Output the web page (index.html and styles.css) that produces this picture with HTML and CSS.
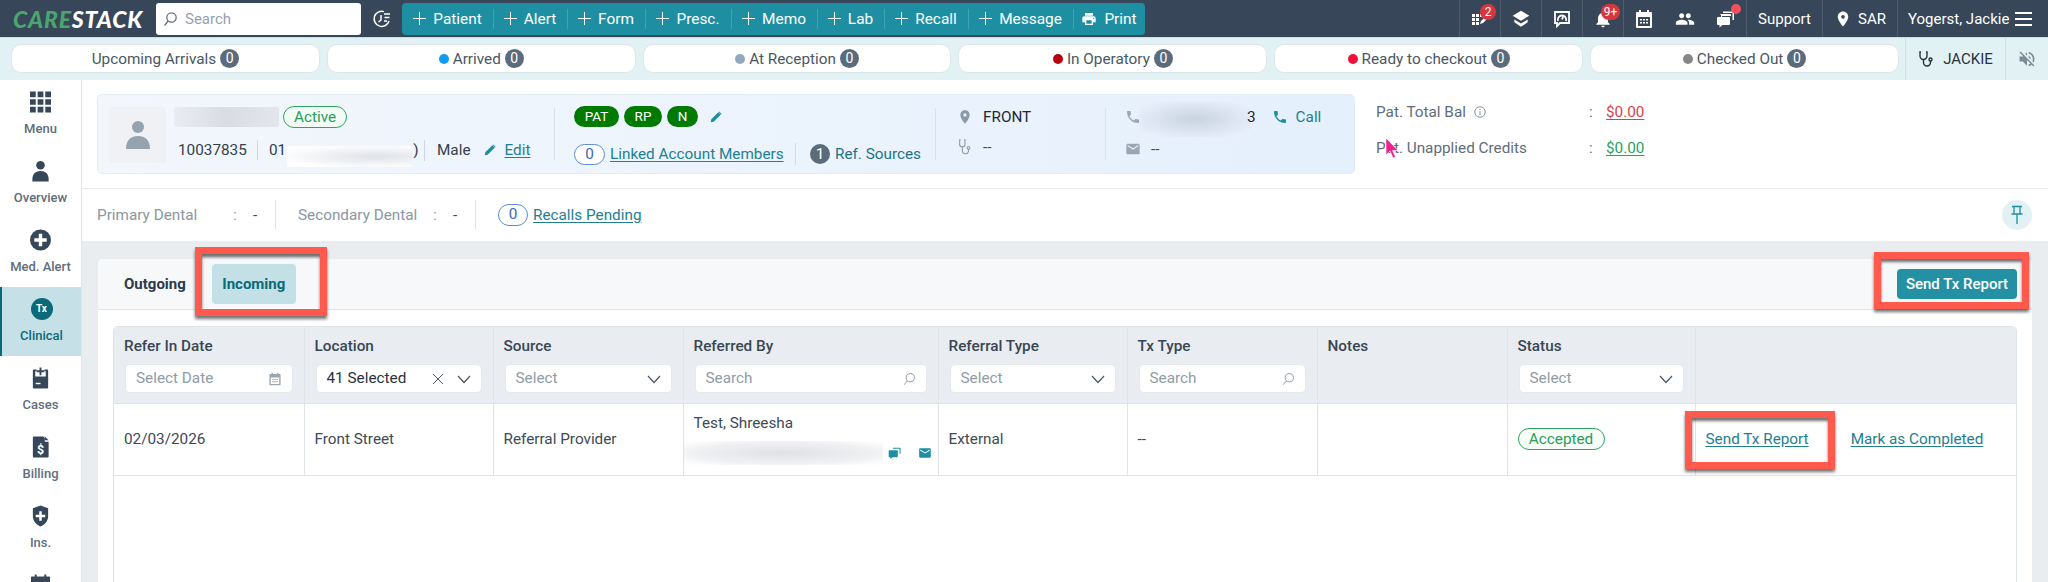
FILE: index.html
```html
<!DOCTYPE html>
<html lang="en">
<head>
<meta charset="UTF-8">
<meta name="viewport" content="width=device-width, initial-scale=1.0">
<title>CareStack - Clinical</title>
<link rel="stylesheet" href="styles.css">
</head>
<body>
<header class="topbar">
    <div class="logo"><span class="logo-care">CARE</span><span class="logo-stack">STACK</span></div>
    <div class="top-search">
        <svg class="ic-16" viewBox="0 0 16 16" fill="none" stroke="#5d6b78" stroke-width="1.2"><circle cx="9.5" cy="6.5" r="4.7"/><path d="M6.2 10 2.5 14.5"/></svg>
        <span>Search</span>
    </div>
    <div class="history">
        <svg width="20" height="20" viewBox="0 0 20 20" fill="none" stroke="#fff" stroke-width="1.5"><path d="M12 2.6A7.6 7.6 0 1 0 17 12"/><path d="M9 6v5l-2.5 2"/><path d="M12 5h6M12.5 8.5h5M12 12h3"/></svg>
    </div>
    <nav class="quick">
        <a class="quick-item"><span class="plus"></span>Patient</a>
        <a class="quick-item"><span class="plus"></span>Alert</a>
        <a class="quick-item"><span class="plus"></span>Form</a>
        <a class="quick-item"><span class="plus"></span>Presc.</a>
        <a class="quick-item"><span class="plus"></span>Memo</a>
        <a class="quick-item"><span class="plus"></span>Lab</a>
        <a class="quick-item"><span class="plus"></span>Recall</a>
        <a class="quick-item"><span class="plus"></span>Message</a>
        <a class="quick-item"><svg class="ic-16" viewBox="0 0 24 24" fill="#fff"><path d="M19 8H5c-1.66 0-3 1.34-3 3v6h4v4h12v-4h4v-6c0-1.66-1.34-3-3-3zm-3 11H8v-5h8v5zm3-7c-.55 0-1-.45-1-1s.45-1 1-1 1 .45 1 1-.45 1-1 1zm-1-9H6v4h12V3z"/></svg>Print</a>
    </nav>
    <div class="top-right">
        <div class="top-cell sep">
            <svg width="18" height="18" viewBox="0 0 18 18" fill="#fff"><path d="M1 4h3v3H1zM5 4h3v3H5zM9 4h3v3H9zM1 8h3v3H1zM5 8h3v3H5zM1 12h3v3H1zM5 12h3v3H5zM9 14l1-3 5-5 2 2-5 5z"/></svg>
            <span class="badge badge-two">2</span>
        </div>
        <div class="top-cell sep">
            <svg width="20" height="20" viewBox="0 0 18 18" fill="#fff"><path d="M9 1.500 1.500 6 9 10.500 16.500 6z"/><path d="M3 9.500v2.500L9 16l6-4V9.500l-6 3.600z"/></svg>
        </div>
        <div class="top-cell sep">
            <svg width="20" height="20" viewBox="0 0 20 20" fill="none" stroke="#fff" stroke-width="1.8"><path d="M3 3h14v11H8l-3 3v-3H3z"/><path d="M6 12a4.200 4.200 0 1 1 8 0M10 10.500l1.500-4"/></svg>
        </div>
        <div class="top-cell sep">
            <svg width="20" height="20" viewBox="0 0 24 24" fill="#fff"><path d="M12 22c1.100 0 2-.9 2-2h-4c0 1.100.9 2 2 2zm6-6v-5c0-3.070-1.630-5.640-4.500-6.320V4c0-.83-.67-1.500-1.500-1.500s-1.500.67-1.500 1.500v.68C7.640 5.360 6 7.920 6 11v5l-2 2v1h16v-1l-2-2z"/></svg>
            <span class="badge badge-nine">9+</span>
        </div>
        <div class="top-cell sep">
            <svg width="18" height="20" viewBox="0 0 18 20" fill="#fff"><path d="M4 1h2v2h6V1h2v2h2a1 1 0 0 1 1 1v14a1 1 0 0 1-1 1H2a1 1 0 0 1-1-1V4a1 1 0 0 1 1-1h2zM3 8v9h12V8z"/><path d="M5 10h2v1.500H5zM8 10h2v1.500H8zM11 10h2v1.500h-2zM5 13h2v1.500H5zM8 13h2v1.500H8zM11 13h2v1.500h-2z"/></svg>
        </div>
        <div class="top-cell">
            <svg width="20" height="20" viewBox="0 0 24 24" fill="#fff"><path d="M16 11c1.660 0 2.990-1.340 2.990-3S17.660 5 16 5c-1.660 0-3 1.340-3 3s1.340 3 3 3zm-8 0c1.660 0 2.990-1.340 2.990-3S9.660 5 8 5C6.340 5 5 6.340 5 8s1.340 3 3 3zm0 2c-2.330 0-7 1.170-7 3.500V19h14v-2.500c0-2.330-4.670-3.500-7-3.500zm8 0c-.29 0-.62.02-.97.05 1.160.84 1.970 1.970 1.970 3.450V19h6v-2.500c0-2.330-4.670-3.500-7-3.500z"/></svg>
        </div>
        <div class="top-cell">
            <svg width="20" height="20" viewBox="0 0 20 20" fill="#fff"><path d="M7 2.500h10a1 1 0 0 1 1 1V11h-1.500V4H7z"/><path d="M4.500 5h10a1 1 0 0 1 .5 1v1H6v1H5V6H4.500z"/><path d="M2 8h11a1 1 0 0 1 1 1v6a1 1 0 0 1-1 1H6.500L3.500 18.500V16H2a1 1 0 0 1-1-1V9a1 1 0 0 1 1-1z"/></svg>
            <span class="dot-alert"></span>
        </div>
        <div class="top-link support">Support</div>
        <div class="top-link sar">
            <svg width="18" height="20" viewBox="0 0 24 24" fill="#fff"><path d="M12 2C8.130 2 5 5.130 5 9c0 5.250 7 13 7 13s7-7.750 7-13c0-3.870-3.130-7-7-7zm0 9.500a2.500 2.500 0 0 1 0-5 2.500 2.500 0 0 1 0 5z"/></svg>
            SAR
        </div>
        <div class="top-link user">
            Yogerst, Jackie
            <span class="burger"><i></i><i></i><i></i></span>
        </div>
    </div>
</header>

<section class="statusbar">
    <div class="pills">
        <div class="pill">Upcoming Arrivals <b class="count">0</b></div>
        <div class="pill"><span class="dot dot-blue"></span>Arrived <b class="count">0</b></div>
        <div class="pill"><span class="dot dot-slate"></span>At Reception <b class="count">0</b></div>
        <div class="pill"><span class="dot dot-darkred"></span>In Operatory <b class="count">0</b></div>
        <div class="pill"><span class="dot dot-red"></span>Ready to checkout <b class="count">0</b></div>
        <div class="pill"><span class="dot dot-grey"></span>Checked Out <b class="count">0</b></div>
    </div>
    <div class="provider">
        <svg width="18" height="18" viewBox="0 0 18 18" fill="none" stroke="#27333f" stroke-width="1.4"><path d="M3 2H2v4a3.500 3.500 0 0 0 7 0V2H8"/><path d="M5.500 9.500v3a3.500 3.500 0 0 0 7 0V11"/><circle cx="12.500" cy="9.500" r="1.500"/></svg>
        JACKIE
    </div>
    <div class="mute">
        <svg width="20" height="20" viewBox="0 0 24 24" fill="#7d8a96"><path d="M16.500 12c0-1.770-1.020-3.290-2.500-4.030v2.210l2.450 2.450c.03-.2.05-.41.05-.63zm2.500 0c0 .94-.2 1.820-.54 2.640l1.510 1.510C20.630 14.910 21 13.500 21 12c0-4.280-2.990-7.860-7-8.770v2.060c2.890.86 5 3.540 5 6.710zM4.270 3L3 4.270 7.730 9H3v6h4l5 5v-6.730l4.250 4.250c-.67.52-1.420.93-2.250 1.180v2.060c1.380-.31 2.630-.95 3.690-1.810L19.730 21 21 19.730l-9-9L4.270 3zM12 4L9.910 6.090 12 8.180V4z"/></svg>
    </div>
</section>

<div class="main">
    <aside class="sidebar">
        <a class="side-item">
            <svg class="side-ic" viewBox="0 0 22 22" fill="#374759"><path d="M0 0h6v6H0zM8 0h6v6H8zM16 0h6v6h-6zM0 8h6v6H0zM8 8h6v6H8zM16 8h6v6h-6zM0 16h6v6H0zM8 16h6v6H8zM16 16h6v6h-6z"/></svg>
            <span>Menu</span>
        </a>
        <a class="side-item">
            <svg class="side-ic" viewBox="0 0 22 22" fill="#374759"><circle cx="11" cy="5" r="4.500"/><path d="M2.500 22v-2.500C2.500 14 6 11 11 11s8.500 3 8.500 8.500V22z"/></svg>
            <span>Overview</span>
        </a>
        <a class="side-item">
            <svg class="side-ic" viewBox="0 0 22 22"><circle cx="11" cy="11" r="11" fill="#374759"/><path d="M9.200 4.500h3.600v4.700h4.700v3.600h-4.700v4.700H9.200v-4.700H4.500V9.200h4.700z" fill="#fff"/></svg>
            <span>Med. Alert</span>
        </a>
        <a class="side-item active">
            <span class="tx-ic">Tx</span>
            <span>Clinical</span>
        </a>
        <a class="side-item">
            <svg class="side-ic" viewBox="0 0 22 22" fill="#374759"><path d="M4 2h3v2H5.500v5.500h11V4H15V2h3a1 1 0 0 1 1 1v18a1 1 0 0 1-1 1H4a1 1 0 0 1-1-1V3a1 1 0 0 1 1-1z"/><path d="M10 0h2v3h3v2h-3v3h-2V5H7V3h3zM3 11.500h16V13H3z"/><path d="M6 16h5v1.500H6z" fill="#fff"/></svg>
            <span>Cases</span>
        </a>
        <a class="side-item">
            <svg class="side-ic" viewBox="0 0 22 22"><path d="M5 0h9l1.500 1.500V5.500h4V21a1 1 0 0 1-1 1H4a1 1 0 0 1-1-1V1a1 1 0 0 1 1-1z" fill="#374759"/><path d="M15.500 0 19.500 4h-4z" fill="#374759"/><text x="11" y="18" text-anchor="middle" font-family="Roboto" font-weight="700" font-size="13" fill="#fff">$</text></svg>
            <span>Billing</span>
        </a>
        <a class="side-item">
            <svg class="side-ic" viewBox="0 0 22 22"><path d="M11 0 19 3v8c0 5.500-3.500 9-8 11-4.500-2-8-5.500-8-11V3z" fill="#374759"/><path d="M9.700 6h2.600v3.700H16v2.600h-3.700V16H9.700v-3.700H6V9.700h3.700z" fill="#fff"/></svg>
            <span>Ins.</span>
        </a>
        <a class="side-item">
            <svg class="side-ic" viewBox="0 0 22 22" fill="#374759"><path d="M5 0h2v2h8V0h2v2h3a1 1 0 0 1 1 1v18a1 1 0 0 1-1 1H2a1 1 0 0 1-1-1V3a1 1 0 0 1 1-1h3z"/></svg>
        </a>
    </aside>

    <div class="workspace">
        <section class="patient">
            <div class="card">
                <div class="card-identity">
                    <div class="avatar">
                        <svg width="24" height="30" viewBox="0 0 24 30" fill="#94a3af"><circle cx="12" cy="7" r="6"/><path d="M0 29c0-8 4-13 12-13s12 5 12 13z"/></svg>
                    </div>
                    <div class="identity-text">
                        <div class="id-row">
                            <span class="redact redact-name"></span>
                            <span class="tag-active">Active</span>
                        </div>
                        <div class="id-row id-details">
                            <span class="mrn">10037835</span>
                            <span class="dob">01<span class="redact redact-dob"></span>)</span>
                            <span class="gender">Male</span>
                            <svg class="ic-14 pencil" viewBox="0 0 24 24" fill="#1e8fa3"><path d="M3 21l1-5L16 4l4 4L8 20zM17.500 2.500l4 4-1 1-4-4z"/></svg>
                            <a class="link">Edit</a>
                        </div>
                    </div>
                </div>
                <div class="card-tags">
                    <div class="tags-row">
                        <span class="tag tag-pat">PAT</span>
                        <span class="tag tag-rp">RP</span>
                        <span class="tag tag-n">N</span>
                        <svg class="ic-14" viewBox="0 0 24 24" fill="#1e8fa3"><path d="M3 21l1-5L16 4l4 4L8 20zM17.500 2.500l4 4-1 1-4-4z"/></svg>
                    </div>
                    <div class="tags-row tags-links">
                        <span class="bubble">0</span>
                        <a class="link linked">Linked Account Members</a>
                        <span class="ref-count">1</span>
                        <span class="ref-text">Ref. Sources</span>
                    </div>
                </div>
                <div class="card-location">
                    <div class="info-row">
                        <svg class="ic-16" viewBox="0 0 24 24" fill="#8a98a5"><path d="M12 2C8.130 2 5 5.130 5 9c0 5.250 7 13 7 13s7-7.750 7-13c0-3.870-3.130-7-7-7zm0 9.500a2.500 2.500 0 0 1 0-5 2.500 2.500 0 0 1 0 5z"/></svg>
                        <span class="front">FRONT</span>
                    </div>
                    <div class="info-row">
                        <svg class="ic-16" viewBox="0 0 18 18" fill="none" stroke="#8a98a5" stroke-width="1.2"><path d="M4 1H3v5a3 3 0 0 0 6 0V1H8"/><path d="M6 9v4a3.500 3.500 0 0 0 7 0v-1.500"/><circle cx="13" cy="10" r="1.500"/></svg>
                        <span class="dashes">--</span>
                    </div>
                </div>
                <div class="card-contact">
                    <div class="info-row">
                        <svg class="ic-16" viewBox="0 0 24 24" fill="#9aa7b2"><path d="M6.620 10.790c1.440 2.830 3.760 5.140 6.590 6.590l2.200-2.200c.27-.27.67-.36 1.020-.24 1.120.37 2.330.57 3.570.57.55 0 1 .45 1 1V20c0 .55-.45 1-1 1-9.390 0-17-7.610-17-17 0-.55.45-1 1-1h3.500c.55 0 1 .45 1 1 0 1.250.2 2.450.57 3.570.11.35.03.74-.25 1.020l-2.200 2.200z"/></svg>
                        <span class="redact redact-phone"></span>
                        <span class="phone-end">3</span>
                        <svg class="ic-16 call-ic" viewBox="0 0 24 24" fill="#1e8fa3"><path d="M6.620 10.790c1.440 2.830 3.760 5.140 6.590 6.590l2.200-2.200c.27-.27.67-.36 1.020-.24 1.120.37 2.330.57 3.570.57.55 0 1 .45 1 1V20c0 .55-.45 1-1 1-9.390 0-17-7.610-17-17 0-.55.45-1 1-1h3.500c.55 0 1 .45 1 1 0 1.250.2 2.450.57 3.570.11.35.03.74-.25 1.020l-2.200 2.200z"/></svg>
                        <a class="call">Call</a>
                    </div>
                    <div class="info-row">
                        <svg class="ic-16" viewBox="0 0 24 24" fill="#9aa7b2"><path d="M20 4H4c-1.100 0-2 .9-2 2v12c0 1.100.9 2 2 2h16c1.100 0 2-.9 2-2V6c0-1.100-.9-2-2-2zm0 4l-8 5-8-5V6l8 5 8-5v2z"/></svg>
                        <span class="dashes">--</span>
                    </div>
                </div>
            </div>
            <div class="balances">
                <span class="bal-label">Pat. Total Bal
                    <svg class="ic-14" viewBox="0 0 16 16" fill="none" stroke="#76848f" stroke-width="1"><circle cx="8" cy="8" r="6"/><path d="M8 7v4.500M8 4.500v1.200"/></svg>
                </span>
                <span>:</span>
                <a class="amount amount-red">$0.00</a>
                <span class="bal-label">Pat. Unapplied Credits</span>
                <span>:</span>
                <a class="amount amount-green">$0.00</a>
            </div>
        </section>

        <section class="insurance">
            <span class="ins-label ins-primary">Primary Dental</span>
            <span class="ins-colon">:</span>
            <span class="ins-value">-</span>
            <span class="ins-label ins-secondary">Secondary Dental</span>
            <span class="ins-colon">:</span>
            <span class="ins-value">-</span>
            <span class="bubble bubble-recall">0</span>
            <a class="link recalls">Recalls Pending</a>
            <button class="pin-btn">
                <svg width="14" height="20" viewBox="0 0 14 20" fill="none" stroke="#1e8fa3" stroke-width="1.3"><path d="M2 1.500h10M4 1.500v7M10 1.500v7M1.500 9h11M7 9v10"/></svg>
            </button>
        </section>

        <section class="content">
            <div class="panel">
                <div class="panel-head">
                    <a class="tab">Outgoing</a>
                    <a class="tab tab-active">Incoming</a>
                    <button class="btn-send">Send Tx Report</button>
                </div>
                <div class="panel-body">
                    <div class="table-wrap">
                        <table class="grid">
                            <colgroup>
                                <col class="c-190"><col class="c-189"><col class="c-190"><col class="c-255"><col class="c-189"><col class="c-190"><col class="c-190"><col class="c-188"><col>
                            </colgroup>
                            <thead>
                                <tr>
                                    <th>Refer In Date
                                        <div class="field"><span class="ph">Select Date</span>
                                            <svg class="ic-14" viewBox="0 0 18 20" fill="#9aa7b2"><path d="M4 1h2v2h6V1h2v2h2a1 1 0 0 1 1 1v14a1 1 0 0 1-1 1H2a1 1 0 0 1-1-1V4a1 1 0 0 1 1-1h2zM3 8v9h12V8z"/><path d="M5 10h2v1.500H5zM8 10h2v1.500H8zM11 10h2v1.500h-2zM5 13h2v1.500H5zM8 13h2v1.500H8zM11 13h2v1.500h-2z"/></svg>
                                        </div>
                                    </th>
                                    <th>Location
                                        <div class="field"><span class="val">41 Selected</span>
                                            <span class="field-ics">
                                                <svg class="ic-14" viewBox="0 0 14 14" fill="none" stroke="#4a5865" stroke-width="1"><path d="M2 2l10 10M12 2 2 12"/></svg>
                                                <svg class="ic-14" viewBox="0 0 14 14" fill="none" stroke="#4a5865" stroke-width="1.2"><path d="M1 4l6 6.500L13 4"/></svg>
                                            </span>
                                        </div>
                                    </th>
                                    <th>Source
                                        <div class="field"><span class="ph">Select</span>
                                            <svg class="ic-14" viewBox="0 0 14 14" fill="none" stroke="#4a5865" stroke-width="1.2"><path d="M1 4l6 6.500L13 4"/></svg>
                                        </div>
                                    </th>
                                    <th>Referred By
                                        <div class="field"><span class="ph">Search</span>
                                            <svg class="ic-14" viewBox="0 0 16 16" fill="none" stroke="#8a98a5" stroke-width="1.1"><circle cx="9.500" cy="6.500" r="4.700"/><path d="M6.200 10 2.500 14.500"/></svg>
                                        </div>
                                    </th>
                                    <th>Referral Type
                                        <div class="field"><span class="ph">Select</span>
                                            <svg class="ic-14" viewBox="0 0 14 14" fill="none" stroke="#4a5865" stroke-width="1.2"><path d="M1 4l6 6.500L13 4"/></svg>
                                        </div>
                                    </th>
                                    <th>Tx Type
                                        <div class="field"><span class="ph">Search</span>
                                            <svg class="ic-14" viewBox="0 0 16 16" fill="none" stroke="#8a98a5" stroke-width="1.1"><circle cx="9.500" cy="6.500" r="4.700"/><path d="M6.200 10 2.500 14.500"/></svg>
                                        </div>
                                    </th>
                                    <th>Notes</th>
                                    <th>Status
                                        <div class="field"><span class="ph">Select</span>
                                            <svg class="ic-14" viewBox="0 0 14 14" fill="none" stroke="#4a5865" stroke-width="1.2"><path d="M1 4l6 6.500L13 4"/></svg>
                                        </div>
                                    </th>
                                    <th></th>
                                </tr>
                            </thead>
                            <tbody>
                                <tr>
                                    <td>02/03/2026</td>
                                    <td>Front Street</td>
                                    <td>Referral Provider</td>
                                    <td class="referred">
                                        <div class="ref-name">Test, Shreesha</div>
                                        <div class="ref-contact">
                                            <span class="redact redact-ref"></span>
                                            <svg class="ic-14" viewBox="0 0 20 20" fill="#1e8fa3"><path d="M7 2.500h10a1 1 0 0 1 1 1V11h-1.500V4H7z"/><path d="M2 6h11a1 1 0 0 1 1 1v8a1 1 0 0 1-1 1H6.500L3.500 18.500V16H2a1 1 0 0 1-1-1V7a1 1 0 0 1 1-1z"/></svg>
                                            <svg class="ic-14" viewBox="0 0 24 24" fill="#1e8fa3"><path d="M20 4H4c-1.100 0-2 .9-2 2v12c0 1.100.9 2 2 2h16c1.100 0 2-.9 2-2V6c0-1.100-.9-2-2-2zm0 4l-8 5-8-5V6l8 5 8-5v2z"/></svg>
                                        </div>
                                    </td>
                                    <td>External</td>
                                    <td>--</td>
                                    <td></td>
                                    <td><span class="tag-accepted">Accepted</span></td>
                                    <td class="actions"><a class="link act-send">Send Tx Report</a><a class="link act-done">Mark as Completed</a></td>
                                </tr>
                            </tbody>
                        </table>
                    </div>
                </div>
            </div>
        </section>
    </div>
</div>

<div class="mark mark-tab"></div>
<div class="mark mark-btn"></div>
<div class="mark mark-link"></div>
<svg class="cursor" width="14" height="22" viewBox="0 0 14 22"><path d="M1 1v17l4-4 3 7 2.500-1-3-6.500H13z" fill="#ee1f8f" stroke="#fff" stroke-width=".6"/></svg>
</body>
</html>
```

FILE: styles.css
```css
* {
    box-sizing: border-box;
}
html, body {
    margin: 0;
    height: 582px;
    overflow: hidden;
}
body {
    position: relative;
    font-family: Roboto, "Liberation Sans", sans-serif;
    font-size: 15.3px;
    color: #3d4a57;
    background: #fff;
    display: flex;
    flex-direction: column;
}
a {
    cursor: pointer;
}
svg {
    flex: none;
    display: block;
}
.ic-14 {
    width: 14px;
    height: 14px;
}
.ic-16 {
    width: 16px;
    height: 16px;
}

/* top bar */
.topbar {
    height: 38px;
    flex: none;
    display: flex;
    align-items: center;
    background: #374759;
    color: #fff;
    border-bottom: 1px solid #c9dde2;
}
.logo {
    width: 156px;
    padding-left: 13px;
    font-family: Lato, sans-serif;
    font-size: 23px;
    font-weight: 900;
    font-style: italic;
    letter-spacing: .8px;
    white-space: nowrap;
}
.logo-care {
    color: #4aa56f;
}
.top-search {
    width: 205px;
    height: 32px;
    background: #fff;
    border-radius: 3px;
    display: flex;
    align-items: center;
    gap: 7px;
    padding-left: 6px;
    color: #94a0ab;
    font-size: 15px;
}
.history {
    width: 41px;
    display: flex;
    justify-content: center;
}
.quick {
    width: 743px;
    height: 32px;
    display: grid;
    grid-template-columns: 91px 74px 78px 86px 86px 67px 84px 105px 72px;
    background: #1e8fa3;
    border-radius: 4px;
}
.quick-item {
    display: flex;
    align-items: center;
    justify-content: center;
    gap: 7px;
    font-size: 15.4px;
    position: relative;
}
.quick-item + .quick-item::before {
    content: "";
    position: absolute;
    left: 0;
    top: 6px;
    bottom: 6px;
    border-left: 1px solid #3fa3b4;
}
.plus {
    width: 13px;
    height: 13px;
    background:
        linear-gradient(#fff, #fff) center / 13px 1.4px no-repeat,
        linear-gradient(#fff, #fff) center / 1.4px 13px no-repeat;
}
.top-right {
    margin-left: auto;
    height: 37px;
    display: flex;
    align-items: stretch;
}
.top-cell {
    width: 41px;
    position: relative;
    display: flex;
    align-items: center;
    justify-content: center;
}
.top-cell.sep {
    border-left: 1px solid #4d5d6e;
}
.badge {
    position: absolute;
    background: #d8363f;
    border-radius: 50%;
    font-size: 12px;
    line-height: 16px;
    height: 16px;
    min-width: 16px;
    text-align: center;
}
.badge-two {
    left: 20px;
    top: 4px;
}
.badge-nine {
    left: 18px;
    top: 4px;
    width: 19px;
    border-radius: 8px;
}
.dot-alert {
    position: absolute;
    right: 5px;
    top: 4px;
    width: 10px;
    height: 10px;
    border-radius: 50%;
    background: #f4515a;
}
.top-link {
    display: flex;
    align-items: center;
    border-left: 1px solid #4d5d6e;
    font-size: 15px;
}
.support {
    width: 76px;
    justify-content: center;
}
.sar {
    width: 75px;
    justify-content: center;
    gap: 6px;
}
.user {
    width: 151px;
    padding-left: 10px;
    gap: 6px;
}
.burger {
    display: flex;
    flex-direction: column;
    gap: 4px;
}
.burger i {
    display: block;
    width: 17px;
    height: 2px;
    background: #fff;
}

/* status bar */
.statusbar {
    height: 42px;
    flex: none;
    display: flex;
    align-items: stretch;
    background: #e2f1f3;
}
.pills {
    width: 1905px;
    padding: 6px 6px 7px 11px;
    display: flex;
    gap: 7px;
}
.pill {
    flex: 1;
    background: #fff;
    border: 1px solid #dbe7ea;
    border-radius: 10px;
    display: flex;
    align-items: center;
    justify-content: center;
    gap: 4px;
    font-size: 15.3px;
    color: #4a5764;
    white-space: nowrap;
}
.count {
    width: 19px;
    height: 19px;
    border-radius: 50%;
    background: #5b6b7c;
    color: #fff;
    font-weight: 400;
    font-size: 14px;
    line-height: 19px;
    text-align: center;
}
.dot {
    width: 10px;
    height: 10px;
    border-radius: 50%;
}
.dot-blue { background: #0f9df2; }
.dot-slate { background: #94a8bd; }
.dot-darkred { background: #b8000e; }
.dot-red { background: #f0103c; }
.dot-grey { background: #868686; }
.provider {
    width: 100px;
    border-left: 1px solid #cfe0e4;
    display: flex;
    align-items: center;
    justify-content: center;
    gap: 7px;
    font-size: 15px;
    color: #27333f;
}
.mute {
    flex: 1;
    border-left: 1px solid #cfe0e4;
    display: flex;
    align-items: center;
    justify-content: center;
}

/* page frame */
.main {
    flex: 1;
    min-height: 0;
    display: flex;
}
.sidebar {
    width: 82px;
    flex: none;
    overflow: hidden;
    border-right: 1px solid #e2e6ea;
}
.side-item {
    height: 69px;
    padding-top: 11px;
    display: flex;
    flex-direction: column;
    align-items: center;
    gap: 7px;
    font-size: 13px;
    line-height: 18px;
    color: #5e6e7e;
    font-weight: 500;
}
.side-ic {
    width: 21px;
    height: 22px;
}
.side-item.active {
    background: #c5e1e7;
    border-left: 2px solid #0b6a78;
    color: #0b6a78;
}
.tx-ic {
    width: 22px;
    height: 22px;
    border-radius: 50%;
    background: #0b6a78;
    color: #fff;
    font-size: 10px;
    font-weight: 700;
    line-height: 22px;
    text-align: center;
}
.workspace {
    flex: 1;
    min-width: 0;
    display: flex;
    flex-direction: column;
}

/* patient header */
.patient {
    height: 109px;
    flex: none;
    padding: 14px 0 0 15px;
    display: flex;
    border-bottom: 1px solid #e6eaee;
}
.card {
    width: 1258px;
    height: 80px;
    display: flex;
    background: linear-gradient(90deg, #f3f7fc, #e5f0fd);
    border: 1px solid #e3ecf6;
    border-radius: 5px;
    padding: 13px 0;
}
.card-identity {
    width: 456px;
    padding-left: 11px;
    display: flex;
    gap: 8px;
}
.avatar {
    width: 57px;
    height: 56px;
    margin-top: -1px;
    background: #eff1f4;
    border-radius: 3px;
    display: flex;
    align-items: center;
    justify-content: center;
}
.identity-text {
    flex: 1;
    margin-top: -2px;
}
.id-row {
    display: flex;
    align-items: center;
}
.redact {
    display: block;
    flex: none;
    border-radius: 2px;
}
.redact-name {
    width: 105px;
    height: 20px;
    background: linear-gradient(90deg, #e9ecf2, #d9dce3 50%, #e3e6ec);
}
.tag-active {
    margin-left: 4px;
    height: 22px;
    width: 64px;
    border: 1px solid #2fa45f;
    border-radius: 11px;
    background: #f2fbf6;
    color: #2a9d58;
    text-align: center;
    line-height: 20px;
}
.id-details {
    margin-top: 10px;
    height: 24px;
    padding-left: 4px;
    color: #333f4b;
    white-space: nowrap;
}
.mrn {
    width: 80px;
    border-right: 1px solid #cdd7e2;
    line-height: 20px;
}
.dob {
    width: 167px;
    padding-left: 11px;
    display: flex;
    align-items: center;
    border-right: 1px solid #cdd7e2;
    line-height: 20px;
}
.redact-dob {
    width: 125px;
    height: 21px;
    margin: 6px 1px -6px 1px;
    background: radial-gradient(ellipse at 70% 50%, #dfe2e8, #fdfdfe 75%);
}
.gender {
    margin-left: 12px;
}
.pencil {
    margin-left: 12px;
}
.link {
    color: #1e8090;
    text-decoration: underline;
    text-underline-offset: 2px;
}
.id-details .link {
    margin-left: 8px;
}
.card-tags {
    width: 381px;
    border-left: 1px solid #d8e2ec;
    padding-left: 19px;
}
.tags-row {
    display: flex;
    align-items: center;
    gap: 5px;
    margin-top: -2px;
}
.tag {
    height: 21px;
    border-radius: 11px;
    background: #007a00;
    color: #fff;
    font-size: 13.5px;
    line-height: 21px;
    text-align: center;
}
.tag-pat { width: 45px; }
.tag-rp { width: 38px; }
.tag-n { width: 31px; }
.tags-row .ic-14 {
    margin-left: 6px;
}
.tags-links {
    margin-top: 16px;
    gap: 0;
    white-space: nowrap;
}
.bubble {
    width: 31px;
    height: 21px;
    flex: none;
    border: 1px solid #5b8bd6;
    border-radius: 11px;
    background: #fff;
    color: #3a68b3;
    text-align: center;
    line-height: 19px;
}
.linked {
    margin-left: 5px;
    width: 186px;
    line-height: 22px;
    border-right: 1px solid #d0dbe6;
}
.ref-count {
    width: 20px;
    height: 20px;
    margin-left: 14px;
    border-radius: 50%;
    background: #5b6b7c;
    color: #fff;
    text-align: center;
    line-height: 20px;
}
.ref-text {
    margin-left: 5px;
    color: #1e7484;
}
.card-location {
    width: 170px;
    border-left: 1px solid #d8e2ec;
    padding-left: 21px;
}
.card-contact {
    flex: 1;
    border-left: 1px solid #d8e2ec;
    padding-left: 19px;
}
.info-row {
    height: 22px;
    display: flex;
    align-items: center;
    gap: 10px;
    margin-top: -2px;
}
.card-location .info-row + .info-row {
    margin-top: 8px;
}
.card-contact .info-row + .info-row {
    margin-top: 10px;
}
.front {
    color: #1f2a35;
}
.dashes {
    color: #3d4a57;
}
.redact-phone {
    width: 112px;
    height: 36px;
    margin: 4px 0 0 -12px;
    background: radial-gradient(ellipse, #c9d3e0, #dde6f2 55%, #e7f0fb 85%);
}
.phone-end {
    margin-left: -14px;
    color: #1f2a35;
}
.call-ic {
    margin-left: 6px;
}
.call {
    margin-left: -2px;
    color: #1e7f91;
}
.balances {
    margin-left: 21px;
    display: grid;
    grid-template-columns: 213px 17px auto;
    grid-auto-rows: 36px;
    align-items: center;
    height: 72px;
    color: #5f6d7a;
}
.bal-label {
    display: flex;
    align-items: center;
    gap: 7px;
}
.amount {
    text-decoration: underline;
    text-underline-offset: 2px;
}
.amount-red { color: #d8434a; }
.amount-green { color: #28a35a; }

/* insurance row */
.insurance {
    height: 52px;
    flex: none;
    display: flex;
    align-items: center;
    padding-left: 15px;
    color: #8a97a3;
    white-space: nowrap;
}
.ins-primary {
    width: 136px;
}
.ins-secondary {
    width: 157px;
    padding-left: 22px;
}
.ins-colon {
    width: 20px;
}
.ins-value {
    width: 23px;
    color: #3d4a57;
    line-height: 30px;
    border-right: 1px solid #dfe4e8;
}
.bubble-recall {
    margin-left: 22px;
    width: 30px;
    height: 22px;
}
.recalls {
    margin-left: 5px;
}
.pin-btn {
    margin-left: auto;
    margin-right: 16px;
    width: 30px;
    height: 30px;
    border: 0;
    border-radius: 50%;
    background: #e2f1f3;
    display: flex;
    align-items: center;
    justify-content: center;
    padding: 0;
}

/* content */
.content {
    flex: 1;
    min-height: 0;
    background: #e9edf0;
    padding: 18px 16px 0;
}
.panel {
    height: 100%;
    background: #fff;
    border-radius: 5px 5px 0 0;
    display: flex;
    flex-direction: column;
}
.panel-head {
    height: 51px;
    flex: none;
    display: flex;
    align-items: center;
    padding-left: 26px;
    background: #f6f8fa;
    border-bottom: 1px solid #dfe4e8;
    border-radius: 5px 5px 0 0;
}
.tab {
    font-weight: 700;
    font-size: 15px;
    color: #2d3a47;
}
.tab-active {
    width: 84px;
    height: 40px;
    margin-left: 26px;
    background: #c2e0e6;
    color: #0b6a78;
    border-radius: 4px;
    line-height: 40px;
    text-align: center;
}
.btn-send {
    margin-left: auto;
    margin-right: 15px;
    width: 120px;
    height: 30px;
    border: 0;
    border-radius: 4px;
    background: #2490a4;
    color: #fff;
    font-family: inherit;
    font-size: 15px;
    font-weight: 500;
    padding: 0;
}
.panel-body {
    flex: 1;
    min-height: 0;
    padding: 16px 15px 0;
}
.table-wrap {
    height: 100%;
    border: 1px solid #dfe4e8;
    border-bottom: 0;
    border-radius: 5px 5px 0 0;
    overflow: hidden;
}
.grid {
    width: 1902px;
    table-layout: fixed;
    border-collapse: collapse;
}
.c-188 { width: 188px; }
.c-189 { width: 189px; }
.c-190 { width: 190px; }
.c-255 { width: 255px; }
.grid th {
    height: 76px;
    padding: 10px 10px 0;
    background: #e9edf1;
    border-right: 1px solid #dfe4e8;
    border-bottom: 1px solid #dfe4e8;
    text-align: left;
    vertical-align: top;
    font-weight: 500;
    color: #3a4653;
    line-height: 19px;
}
.grid th:last-child,
.grid td:last-child {
    border-right: 0;
}
.grid td {
    height: 72px;
    padding: 0 10px;
    border-right: 1px solid #dfe4e8;
    border-bottom: 1px solid #dfe4e8;
    color: #3d4a57;
}
.field {
    height: 29px;
    margin: 8px 1px 0;
    padding: 0 10px;
    background: #fff;
    border: 1px solid #e4e8ec;
    border-radius: 5px;
    display: flex;
    align-items: center;
    justify-content: space-between;
    font-weight: 400;
}
.ph {
    color: #8f9ca8;
}
.val {
    color: #27333f;
}
.field-ics {
    display: flex;
    gap: 12px;
}
.referred {
    vertical-align: top;
}
.ref-name {
    margin-top: 9px;
    line-height: 20px;
}
.ref-contact {
    display: flex;
    align-items: center;
    margin: 8px 0 0 -10px;
}
.redact-ref {
    width: 199px;
    height: 24px;
    margin-right: 5px;
    background: radial-gradient(ellipse, #dfe1e6, #f0f1f3 65%, #fdfdfd 90%);
}
.ref-contact svg + svg {
    margin-left: 16px;
}
.tag-accepted {
    display: block;
    width: 87px;
    height: 22px;
    border: 1px solid #2fa45f;
    border-radius: 11px;
    background: #f7fdf9;
    color: #2a9d58;
    text-align: center;
    line-height: 20px;
}
.actions {
    white-space: nowrap;
}
.act-done {
    margin-left: 42px;
}

/* review markers drawn over the screenshot */
.mark {
    position: absolute;
    border: 7px solid #ff5a4d;
    box-shadow: 0 3px 3px rgba(0, 0, 0, .55), inset 0 3px 3px rgba(0, 0, 0, .55);
}
.mark-tab {
    left: 195px;
    top: 247px;
    width: 132px;
    height: 69px;
}
.mark-btn {
    left: 1874px;
    top: 252px;
    width: 155px;
    height: 57px;
}
.mark-link {
    left: 1685px;
    top: 411px;
    width: 150px;
    height: 58px;
}
.cursor {
    position: absolute;
    left: 1385px;
    top: 137px;
}
```
